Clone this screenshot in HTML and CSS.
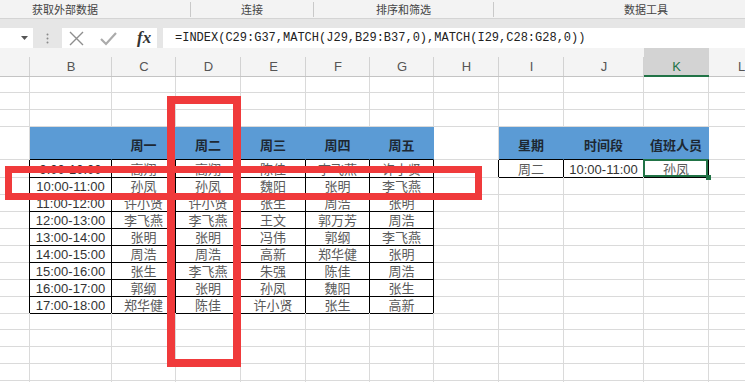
FILE: index.html
```html
<!DOCTYPE html>
<html lang="zh-CN">
<head>
<meta charset="utf-8">
<title>INDEX MATCH</title>
<link rel="stylesheet" href="styles.css">
</head>
<body>
<div class="ribbon">
  <div class="grp g1">获取外部数据</div>
  <div class="sep"></div>
  <div class="grp g2">连接</div>
  <div class="sep"></div>
  <div class="grp g3">排序和筛选</div>
  <div class="sep"></div>
  <div class="grp g4">数据工具</div>
</div>
<div class="band"></div>
<div class="fbar">
  <div class="namebox"><svg class="arrow" width="7" height="4" viewBox="0 0 7 4"><polygon points="0,0 7,0 3.5,4" fill="#555"/></svg></div>
  <div class="dots"><svg width="3" height="11" viewBox="0 0 3 11"><circle cx="1.5" cy="1.5" r="1" fill="#8a8a8a"/><circle cx="1.5" cy="5.5" r="1" fill="#8a8a8a"/><circle cx="1.5" cy="9.5" r="1" fill="#8a8a8a"/></svg></div>
  <div class="fxbox">
    <svg class="ico-x" width="17" height="17" viewBox="0 0 17 17"><path d="M2 2 L15 15 M15 2 L2 15" stroke="#8e8e8e" stroke-width="1.4" fill="none"/></svg>
    <svg class="ico-ok" width="17" height="17" viewBox="0 0 17 17"><polyline points="1,9 6,14 16,3" stroke="#ababab" stroke-width="2.2" fill="none"/></svg>
    <span class="fx">fx</span>
  </div>
  <div class="formula">=INDEX(C29:G37,MATCH(J29,B29:B37,0),MATCH(I29,C28:G28,0))</div>
</div>
<div class="sheet">
  <div class="row colhead">
    <span class="c"></span><span class="c">B</span><span class="c">C</span><span class="c">D</span><span class="c">E</span><span class="c">F</span><span class="c">G</span><span class="c">H</span><span class="c">I</span><span class="c">J</span><span class="c act">K</span><span class="c">L</span>
  </div>
  <div class="row"><span class="c"></span><span class="c"></span><span class="c"></span><span class="c"></span><span class="c"></span><span class="c"></span><span class="c"></span><span class="c"></span><span class="c"></span><span class="c"></span><span class="c"></span><span class="c"></span></div>
  <div class="row"><span class="c"></span><span class="c"></span><span class="c"></span><span class="c"></span><span class="c"></span><span class="c"></span><span class="c"></span><span class="c"></span><span class="c"></span><span class="c"></span><span class="c"></span><span class="c"></span></div>
  <div class="row"><span class="c"></span><span class="c"></span><span class="c"></span><span class="c"></span><span class="c"></span><span class="c"></span><span class="c"></span><span class="c"></span><span class="c"></span><span class="c"></span><span class="c"></span><span class="c"></span></div>
  <div class="row head">
    <span class="c"></span><span class="c hd"></span><span class="c hd">周一</span><span class="c hd">周二</span><span class="c hd">周三</span><span class="c hd">周四</span><span class="c hd">周五</span><span class="c"></span><span class="c hd">星期</span><span class="c hd">时间段</span><span class="c hd">值班人员</span><span class="c"></span>
  </div>
  <div class="row">
    <span class="c edge"></span><span class="c bx t">9:00-10:00</span><span class="c bx">高翔</span><span class="c bx">高翔</span><span class="c bx">陈佳</span><span class="c bx">李飞燕</span><span class="c bx">许小贤</span><span class="c edge"></span><span class="c bx">周二</span><span class="c bx t">10:00-11:00</span><span class="c bx sel">孙凤</span><span class="c"></span>
  </div>
  <div class="row">
    <span class="c edge"></span><span class="c bx t">10:00-11:00</span><span class="c bx">孙凤</span><span class="c bx">孙凤</span><span class="c bx">魏阳</span><span class="c bx">张明</span><span class="c bx">李飞燕</span><span class="c"></span><span class="c"></span><span class="c"></span><span class="c"></span><span class="c"></span>
  </div>
  <div class="row">
    <span class="c edge"></span><span class="c bx t">11:00-12:00</span><span class="c bx">许小贤</span><span class="c bx">许小贤</span><span class="c bx">张生</span><span class="c bx">周浩</span><span class="c bx">张明</span><span class="c"></span><span class="c"></span><span class="c"></span><span class="c"></span><span class="c"></span>
  </div>
  <div class="row">
    <span class="c edge"></span><span class="c bx t">12:00-13:00</span><span class="c bx">李飞燕</span><span class="c bx">李飞燕</span><span class="c bx">王文</span><span class="c bx">郭万芳</span><span class="c bx">周浩</span><span class="c"></span><span class="c"></span><span class="c"></span><span class="c"></span><span class="c"></span>
  </div>
  <div class="row">
    <span class="c edge"></span><span class="c bx t">13:00-14:00</span><span class="c bx">张明</span><span class="c bx">张明</span><span class="c bx">冯伟</span><span class="c bx">郭纲</span><span class="c bx">李飞燕</span><span class="c"></span><span class="c"></span><span class="c"></span><span class="c"></span><span class="c"></span>
  </div>
  <div class="row">
    <span class="c edge"></span><span class="c bx t">14:00-15:00</span><span class="c bx">周浩</span><span class="c bx">周浩</span><span class="c bx">高新</span><span class="c bx">郑华健</span><span class="c bx">张明</span><span class="c"></span><span class="c"></span><span class="c"></span><span class="c"></span><span class="c"></span>
  </div>
  <div class="row">
    <span class="c edge"></span><span class="c bx t">15:00-16:00</span><span class="c bx">张生</span><span class="c bx">李飞燕</span><span class="c bx">朱强</span><span class="c bx">陈佳</span><span class="c bx">周浩</span><span class="c"></span><span class="c"></span><span class="c"></span><span class="c"></span><span class="c"></span>
  </div>
  <div class="row">
    <span class="c edge"></span><span class="c bx t">16:00-17:00</span><span class="c bx">郭纲</span><span class="c bx">张明</span><span class="c bx">孙凤</span><span class="c bx">魏阳</span><span class="c bx">张生</span><span class="c"></span><span class="c"></span><span class="c"></span><span class="c"></span><span class="c"></span>
  </div>
  <div class="row">
    <span class="c edge"></span><span class="c bx t">17:00-18:00</span><span class="c bx">郑华健</span><span class="c bx">陈佳</span><span class="c bx">许小贤</span><span class="c bx">张生</span><span class="c bx">高新</span><span class="c"></span><span class="c"></span><span class="c"></span><span class="c"></span><span class="c"></span>
  </div>
  <div class="row"><span class="c"></span><span class="c"></span><span class="c"></span><span class="c"></span><span class="c"></span><span class="c"></span><span class="c"></span><span class="c"></span><span class="c"></span><span class="c"></span><span class="c"></span><span class="c"></span></div>
  <div class="row"><span class="c"></span><span class="c"></span><span class="c"></span><span class="c"></span><span class="c"></span><span class="c"></span><span class="c"></span><span class="c"></span><span class="c"></span><span class="c"></span><span class="c"></span><span class="c"></span></div>
  <div class="row"><span class="c"></span><span class="c"></span><span class="c"></span><span class="c"></span><span class="c"></span><span class="c"></span><span class="c"></span><span class="c"></span><span class="c"></span><span class="c"></span><span class="c"></span><span class="c"></span></div>
  <div class="row"><span class="c"></span><span class="c"></span><span class="c"></span><span class="c"></span><span class="c"></span><span class="c"></span><span class="c"></span><span class="c"></span><span class="c"></span><span class="c"></span><span class="c"></span><span class="c"></span></div>
  <div class="row"><span class="c"></span><span class="c"></span><span class="c"></span><span class="c"></span><span class="c"></span><span class="c"></span><span class="c"></span><span class="c"></span><span class="c"></span><span class="c"></span><span class="c"></span><span class="c"></span></div>
</div>
<div class="mark mark-col"></div>
<div class="mark mark-row"></div>
</body>
</html>
```
FILE: styles.css
```css
html, body {
  margin: 0;
  padding: 0;
}
body {
  width: 745px;
  height: 382px;
  overflow: hidden;
  position: relative;
  background: #fff;
  font-family: "Noto Sans CJK SC", "Noto Sans", sans-serif;
}

/* ribbon group labels */
.ribbon {
  display: flex;
  height: 18px;
  background: #f3f3f3;
  border-bottom: 1px solid #d4d4d4;
  font-size: 11px;
  line-height: 18px;
  color: #444;
  white-space: nowrap;
}
.grp { flex: none; }
.g1 { width: 158px; padding-left: 32px; }
.g2 { width: 122px; text-align: center; }
.g3 { width: 179px; text-align: center; }
.g4 { width: 304px; text-align: center; }
.sep {
  flex: none;
  width: 1px;
  height: 15px;
  margin-top: 2px;
  background: #c9c9c9;
}

.band {
  height: 9px;
  background: #e6e6e6;
}

/* formula bar */
.fbar {
  display: flex;
  height: 20px;
  background: #e6e6e6;
}
.namebox {
  flex: none;
  width: 33px;
  background: #fff;
  display: flex;
  align-items: center;
  justify-content: flex-end;
}
.arrow { margin-right: 5px; }
.dots {
  flex: none;
  width: 29px;
  display: flex;
  align-items: center;
  justify-content: center;
}
.fxbox {
  flex: none;
  width: 95px;
  background: #fff;
  display: flex;
  align-items: center;
  padding-left: 6px;
  box-sizing: border-box;
}
.ico-ok { margin-left: 15px; }
.fx {
  margin-left: 20px;
  font-family: "Liberation Serif", serif;
  font-style: italic;
  font-weight: bold;
  font-size: 17px;
  line-height: 20px;
  color: #333;
}
.formula {
  flex: 1;
  margin-left: 6px;
  background: #fff;
  padding-left: 12px;
  font-family: "Liberation Mono", monospace;
  font-size: 12px;
  line-height: 20px;
  color: #222;
  white-space: nowrap;
}

/* sheet grid */
.row {
  display: grid;
  grid-template-columns: 30px 82px 64px 65px 65px 64px 64px 65px 65px 80px 65px 65px;
  height: 17px;
}
.c {
  box-sizing: border-box;
  border-right: 1px solid #dadada;
  border-bottom: 1px solid #dadada;
  text-align: center;
  font-family: "Liberation Sans", "Noto Sans CJK SC", sans-serif;
  font-size: 13px;
  line-height: 15px;
  padding-top: 2px;
  color: #5a5a5a;
  white-space: nowrap;
}
.t { color: #333; }
.edge { border-right-color: #000; }
.bx {
  border-right-color: #000;
  border-bottom-color: #000;
}

/* column letters */
.colhead {
  height: 28px;
  background: #f4f4f4;
}
.colhead .c {
  position: relative;
  border-right: none;
  border-bottom: 1px solid #c4c4c4;
  font-size: 13px;
  line-height: 17px;
  padding-top: 10px;
  color: #555;
}
.colhead .c::after {
  content: "";
  position: absolute;
  right: 0;
  top: 9px;
  bottom: 0;
  width: 1px;
  background: #d2d2d2;
}
.colhead .act {
  background: #d3d3d3;
  border-bottom: 2px solid #217346;
  color: #217346;
}

/* table header */
.head { height: 33px; }
.head .c {
  line-height: 17px;
  padding-top: 10px;
}
.hd {
  background: #5b9bd5;
  border-right-color: #5b9bd5;
  border-bottom-color: #000;
  font-weight: bold;
  color: #1d2833;
}

/* selected cell */
.sel { position: relative; }
.sel::after {
  content: "";
  position: absolute;
  left: -1px;
  top: -1px;
  right: 0;
  bottom: 0;
  border: 2px solid #217346;
}
.sel::before {
  content: "";
  position: absolute;
  right: -3px;
  bottom: -3px;
  width: 5px;
  height: 5px;
  background: #217346;
  z-index: 1;
}

/* red annotation boxes */
.mark {
  position: absolute;
  box-sizing: border-box;
  border: 7px solid #f03a3b;
}
.mark-col {
  left: 167px;
  top: 96px;
  width: 74px;
  height: 271px;
  border-width: 8px;
}
.mark-row {
  left: 5px;
  top: 166px;
  width: 477px;
  height: 34px;
}
```
